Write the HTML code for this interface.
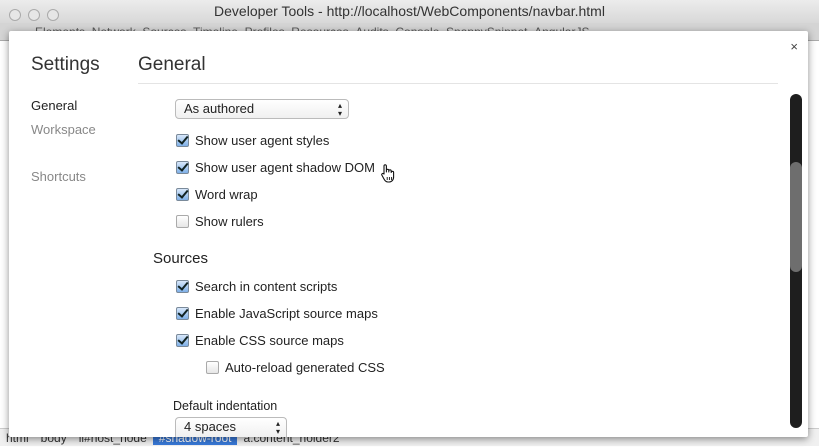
<!DOCTYPE html>
<html><head><meta charset="utf-8"><style>
*{margin:0;padding:0;box-sizing:border-box}
body{width:819px;height:446px;overflow:hidden;position:relative;background:#fff;font-family:"Liberation Sans","DejaVu Sans",sans-serif;color:#222}
.title{position:absolute;left:0;top:0;width:819px;height:23px;background:linear-gradient(#ececec,#d8d8d8);text-align:center;font-size:14px;line-height:23px;color:#333}
.lights{position:absolute;left:9px;top:5px}
.lights span{display:inline-block;width:12px;height:12px;border-radius:50%;border:1px solid #aaa;background:#e6e6e6;margin-right:7px}
.tool{position:absolute;left:0;top:23px;width:819px;height:18px;background:#d4d4d4;border-bottom:1px solid #aaa;font-size:12px;color:#555;padding-left:35px;line-height:18px;white-space:nowrap}
.crumbs{position:absolute;left:0;top:428px;width:819px;height:18px;background:#f0f0f0;border-top:1px solid #ccc;font-size:12px;line-height:18px;color:#333;white-space:nowrap}
.crumbs span{padding:0 6px}
.crumbs .sel{background:#3879d9;color:#fff}
.dlg{position:absolute;left:9px;top:31px;width:799px;height:406px;background:#fff;box-shadow:0 2px 8px rgba(0,0,0,.45);border-radius:2px}
.t{position:absolute;white-space:nowrap}
.h1{font-size:19px;color:#333}
.nav{font-size:13px}
.opt{font-size:13px;color:#222}
.cb{position:absolute;width:13px;height:13px;border:1px solid #7a8a9a;border-radius:2px;background:linear-gradient(#d8e8fa,#7fb0e8)}
.cb.on::after{content:"";position:absolute;left:3px;top:-1px;width:4px;height:8px;border:solid #122;border-width:0 2px 2px 0;transform:rotate(40deg)}
.cb.off{background:linear-gradient(#fff,#e6e6e6);border-color:#aaa}
.sel-box{position:absolute;border:1px solid #bbb;border-radius:4px;background:linear-gradient(#fff,#f0f0f0);font-size:13px;padding-left:8px;line-height:18px}
.arr{position:absolute;right:6px;font-size:8px;line-height:8px;top:2px}
</style></head><body>
<div class="title"><div class="lights"><span></span><span></span><span></span></div>Developer Tools - http://localhost/WebComponents/navbar.html</div>
<div class="tool">Elements &nbsp;Network &nbsp;Sources &nbsp;Timeline &nbsp;Profiles &nbsp;Resources &nbsp;Audits &nbsp;Console &nbsp;SnappySnippet &nbsp;AngularJS</div>
<div class="crumbs"><span>html</span><span>body</span><span>li#host_node</span><span class="sel">#shadow-root</span><span>a.content_holder2</span></div>
<div class="dlg">
<div class="t" style="right:10px;top:8px;font-size:13px;color:#444">×</div>
<div class="t h1" style="left:22px;top:23px">Settings</div>
<div class="t h1" style="left:129px;top:23px">General</div>
<div style="position:absolute;left:129px;top:52px;width:640px;height:1px;background:#e4e4e4"></div>
<div class="t nav" style="left:22px;top:67px">General</div>
<div class="t nav" style="left:22px;top:91px;color:#888">Workspace</div>
<div class="t nav" style="left:22px;top:138px;color:#888">Shortcuts</div>
<div class="sel-box" style="left:166px;top:68px;width:174px;height:20px">As authored<span class="arr">▴<br>▾</span></div>
<div class="cb on" style="left:167px;top:103px"></div><div class="t opt" style="left:186px;top:102px">Show user agent styles</div>
<div class="cb on" style="left:167px;top:130px"></div><div class="t opt" style="left:186px;top:129px">Show user agent shadow DOM</div>
<svg style="position:absolute;left:371px;top:132px" width="16" height="20" viewBox="0 0 16 20"><path d="M4 11V3a1.2 1.2 0 0 1 2.4 0v6V7.5a1.2 1.2 0 0 1 2.4 0V9V8a1.2 1.2 0 0 1 2.4 0v1.5a1.2 1.2 0 0 1 2.4 0V14c0 3-2 5-4.5 5H8c-2 0-3-1-4-3L1.8 12a1.1 1.1 0 0 1 1.8-1.2Z" fill="#fff" stroke="#111" stroke-width="1.1" stroke-linejoin="round"/><path d="M7.2 14v3M9.4 14v3M11.6 14v3" stroke="#111" stroke-width=".9"/></svg>
<div class="cb on" style="left:167px;top:157px"></div><div class="t opt" style="left:186px;top:156px">Word wrap</div>
<div class="cb off" style="left:167px;top:184px"></div><div class="t opt" style="left:186px;top:183px">Show rulers</div>
<div class="t" style="left:144px;top:219px;font-size:15px">Sources</div>
<div class="cb on" style="left:167px;top:249px"></div><div class="t opt" style="left:186px;top:248px">Search in content scripts</div>
<div class="cb on" style="left:167px;top:276px"></div><div class="t opt" style="left:186px;top:275px">Enable JavaScript source maps</div>
<div class="cb on" style="left:167px;top:303px"></div><div class="t opt" style="left:186px;top:302px">Enable CSS source maps</div>
<div class="cb off" style="left:197px;top:330px"></div><div class="t opt" style="left:216px;top:329px">Auto-reload generated CSS</div>
<div class="t opt" style="left:164px;top:368px;font-size:12.5px">Default indentation</div>
<div class="sel-box" style="left:166px;top:386px;width:112px;height:20px;border-bottom:none;border-radius:4px 4px 0 0">4 spaces<span class="arr">▴<br>▾</span></div>
<div style="position:absolute;left:781px;top:63px;width:12px;height:334px;border-radius:6px;background:#1e1e1e"></div>
<div style="position:absolute;left:781px;top:131px;width:12px;height:110px;border-radius:6px;background:#6e6e6e"></div>
</div>
</body></html>
